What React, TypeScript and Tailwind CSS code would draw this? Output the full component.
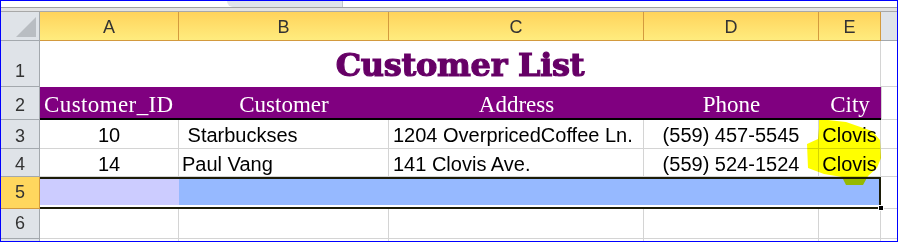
import React from 'react';

const cols = 'grid grid-cols-[39px_139px_210px_255px_175px_62px_16px]';
const sans = "font-['Liberation_Sans',Arial,sans-serif]";
const serif = "font-['Liberation_Serif','Times_New_Roman',serif]";

// row header cell (the numbers on the left)
function RowHead({ n, pb, active }: { n: number; pb: string; active?: boolean }) {
  return (
    <div
      className={`flex items-end justify-center border-r border-b text-[18px] leading-none text-[#333] ${sans} ${pb} ${
        active ? 'bg-[#ffd75e] border-[#d39a3e]' : 'bg-[#dfe3e8] border-[#a3a8ad]'
      }`}
    >
      {n}
    </div>
  );
}

type Customer = { id: number; name: string; address: string; phone: string; city: string };

const customers: Customer[] = [
  { id: 10, name: '\u00a0Starbuckses', address: '1204 OverpricedCoffee Ln.', phone: '(559) 457-5545', city: 'Clovis' },
  { id: 14, name: 'Paul Vang', address: '141 Clovis Ave.', phone: '(559) 524-1524', city: 'Clovis' },
];

export default function App() {
  return (
    <div className="relative w-[898px] h-[242px] overflow-hidden border border-[#0000ff] bg-white">
      {/* top strip with the sheet tab */}
      <div className="h-[6px] flex">
        <div className="ml-[226px] w-[116px] h-[6px] bg-[#dfe3ea] rounded-bl-[10px] border-r border-[#c0c4ca]" />
      </div>
      <div className="h-[1px] bg-[#a0a0a0]" />
      <div className="h-[3px] bg-[#e2e2e2]" />
      <div className="h-[1px] bg-[#a8a8a8]" />

      {/* column headers */}
      <div className={`${cols} h-[29px]`}>
        <div className="relative bg-[#dfe3e8] border-r border-b border-[#a3a8ad]">
          <svg className="absolute left-[15px] top-[5px]" width="20" height="20" viewBox="0 0 20 20">
            <polygon points="20,0 20,20 0,20" fill="#b9bdc2" />
          </svg>
        </div>
        {['A', 'B', 'C', 'D', 'E'].map((c) => (
          <div
            key={c}
            className={`flex justify-center pt-[6px] bg-linear-to-b from-[#ffd35a] to-[#ffec7e] border-r border-b border-[#d39a3e] text-[18px] leading-none text-[#333] ${sans}`}
          >
            {c}
          </div>
        ))}
        <div className="bg-[#dfe3e8] border-b border-[#a3a8ad]" />
      </div>

      {/* row 1: title */}
      <div className={`${cols} h-[46px]`}>
        <RowHead n={1} pb="pb-[6px]" />
        <div className="col-span-5 flex justify-center pt-[8px] border-r border-[#d4d4d4]">
          <span className="font-['DejaVu_Serif',serif] font-bold text-[32px] leading-none tracking-[-0.3px] text-[#660066] [-webkit-text-stroke:1.2px_#660066]">
            Customer List
          </span>
        </div>
        <div className="border-b border-[#d4d4d4]" />
      </div>

      {/* row 2: purple column titles */}
      <div className={`${cols} h-[33px]`}>
        <RowHead n={2} pb="pb-[5px]" />
        <div className={`col-span-5 grid grid-cols-[139px_210px_255px_175px_62px] bg-[#800080] border-b-2 border-black text-white text-[23px] leading-none ${serif}`}>
          <div className="flex items-end pl-[4px] pb-[2px] tracking-[0.4px]">Customer_ID</div>
          <div className="flex items-end justify-center pb-[2px]">Customer</div>
          <div className="flex items-end justify-center pb-[2px]">Address</div>
          <div className="flex items-end justify-center pb-[2px]">Phone</div>
          <div className="flex items-end justify-center pb-[2px]">City</div>
        </div>
        <div className="border-l border-b border-[#d4d4d4]" />
      </div>

      {/* rows 3-4: data */}
      {customers.map((c, i) => (
        <div key={c.id} className={`${cols} ${i === 0 ? 'h-[29px]' : 'h-[28px]'}`}>
          <RowHead n={i + 3} pb="pb-[3px]" />
          {[
            { v: String(c.id), a: 'justify-center' },
            { v: c.name, a: 'justify-start pl-[3px]' },
            { v: c.address, a: 'justify-start pl-[4px]' },
            { v: c.phone, a: 'justify-center' },
            { v: c.city, a: 'justify-center' },
          ].map((cell, j) => (
            <div
              key={j}
              className={`flex items-end whitespace-nowrap border-r border-b border-[#d4d4d4] text-[20px] leading-none text-black ${sans} ${cell.a} ${
                i === 0 ? 'pb-[3px]' : 'pb-[2px]'
              }`}
            >
              {cell.v}
            </div>
          ))}
          <div className="border-b border-[#d4d4d4]" />
        </div>
      ))}

      {/* row 5: selected */}
      <div className={`${cols} h-[32px]`}>
        <RowHead n={5} pb="pb-[7px]" active />
        <div className="relative col-span-5 border-t-2 border-r-2 border-b-2 border-[#1c1c08] flex flex-col">
          <div className="flex h-[26px]">
            <div className="w-[139px] bg-[#ccccff]" />
            <div className="flex-1 bg-[#96b9ff]" />
          </div>
          <div className="absolute -right-[5px] -bottom-[4px] w-[6px] h-[6px] bg-black border border-white" />
        </div>
        <div className="border-b border-[#d4d4d4]" />
      </div>

      {/* row 6: empty */}
      <div className={`${cols} h-[30px]`}>
        <RowHead n={6} pb="pb-[6px]" />
        {[0, 1, 2, 3, 4].map((k) => (
          <div key={k} className="border-r border-b border-[#d4d4d4]" />
        ))}
        <div className="border-b border-[#d4d4d4]" />
      </div>

      {/* row 7, cut off */}
      <div className={`${cols} h-[4px]`}>
        <div className="bg-[#dfe3e8] border-r border-[#a3a8ad]" />
        {[0, 1, 2, 3, 4].map((k) => (
          <div key={k} className="border-r border-[#d4d4d4]" />
        ))}
        <div />
      </div>

      {/* yellow highlighter marks over the City cells */}
      <svg
        className="absolute left-[-1px] top-[-1px] pointer-events-none mix-blend-multiply"
        width="898"
        height="242"
        viewBox="0 0 898 242"
      >
        <polygon
          points="819,119 846,122 872,131 880,140 881,158 877,168 868,176 863,185 846,185 842,177 824,174 808,168 807,144 818,139 819,128"
          fill="#ffff00"
        />
      </svg>
    </div>
  );
}
